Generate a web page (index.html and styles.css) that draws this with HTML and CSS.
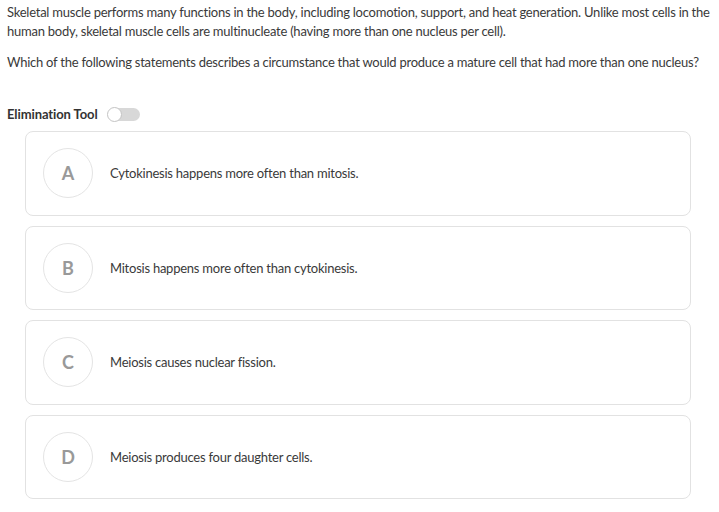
FILE: index.html
```html
<!DOCTYPE html>
<html>
<head>
<meta charset="utf-8">
<link rel="stylesheet" href="styles.css">
</head>
<body>
<div class="page">
  <p class="stem">Skeletal muscle performs many functions in the body, including locomotion, support, and heat generation. Unlike most cells in the human body, skeletal muscle cells are multinucleate (having more than one nucleus per cell).</p>
  <p class="question">Which of the following statements describes a circumstance that would produce a mature cell that had more than one nucleus?</p>
  <div class="elim">
    <span class="elim-label">Elimination Tool</span>
    <span class="toggle"><span class="knob"></span></span>
  </div>
  <div class="options">
    <div class="option"><span class="letter">A</span><span class="text">Cytokinesis happens more often than mitosis.</span></div>
    <div class="option"><span class="letter">B</span><span class="text">Mitosis happens more often than cytokinesis.</span></div>
    <div class="option"><span class="letter">C</span><span class="text">Meiosis causes nuclear fission.</span></div>
    <div class="option"><span class="letter">D</span><span class="text">Meiosis produces four daughter cells.</span></div>
  </div>
</div>
</body>
</html>
```

FILE: styles.css
```css
html, body {
  margin: 0;
  padding: 0;
  background: #fff;
}
body {
  font-family: Lato, "Open Sans", sans-serif;
  color: #3a3a3a;
  font-size: 13px;
  letter-spacing: -0.24px;
}
.page {
  padding: 3px 7px 0 7px;
}
.stem {
  margin: 0;
  line-height: 19px;
}
.question {
  margin: 12px 0 0 0;
  line-height: 19px;
}
.elim {
  display: flex;
  align-items: center;
  margin-top: 34px;
  gap: 10px;
}
.elim-label {
  font-weight: 700;
  color: #333;
  font-size: 13px;
  letter-spacing: -0.1px;
}
.toggle {
  position: relative;
  width: 32px;
  height: 13px;
  border-radius: 7px;
  background: #d8d8d8;
  display: inline-block;
}
.knob {
  position: absolute;
  left: -1px;
  top: -1px;
  width: 13px;
  height: 13px;
  border-radius: 50%;
  background: #fff;
  border: 1px solid #c4c4c4;
}
.options {
  display: flex;
  flex-direction: column;
  gap: 10px;
  margin: 9px 21px 0 18px;
}
.option {
  box-sizing: border-box;
  display: flex;
  align-items: center;
  height: 84.6px;
  border: 1px solid #e2e2e2;
  border-radius: 8px;
  padding-left: 17px;
}
.letter {
  width: 48px;
  height: 48px;
  border: 1px solid #e4e4e4;
  border-radius: 50%;
  display: flex;
  align-items: center;
  justify-content: center;
  font-weight: 700;
  font-size: 18px;
  letter-spacing: 0;
  color: #999;
  flex: none;
}
.text {
  margin-left: 17px;
  color: #3a3a3a;
}
```
